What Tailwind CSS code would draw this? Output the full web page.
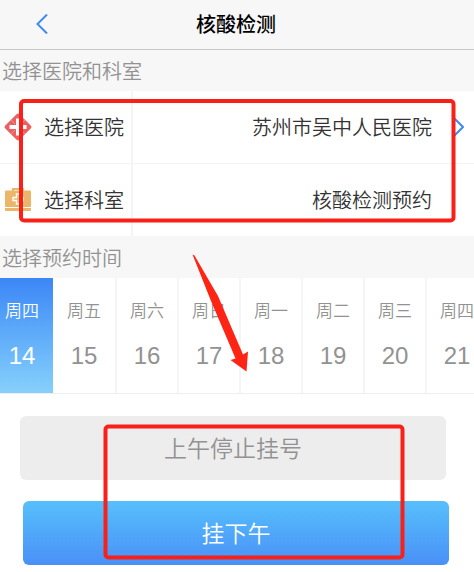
<!DOCTYPE html>
<html lang="zh-CN">
<head>
    <meta charset="UTF-8">
    <meta name="viewport" content="width=device-width, initial-scale=1.0">
    <title>核酸检测</title>
    <script src="https://cdn.jsdelivr.net/npm/@tailwindcss/browser@4"></script>
</head>
<body class="relative overflow-x-hidden bg-white font-['Liberation_Sans','Noto_Sans_CJK_SC',sans-serif] text-[#333]">
    <!-- Header -->
    <header class="grid h-[50px] grid-cols-[60px_1fr_62px] items-center border-b border-[#c8c8c8] bg-[#f7f7f7]">
        <button type="button" aria-label="返回" class="flex h-full items-center pb-[2px] pl-9">
            <svg class="h-5 w-3" viewBox="0 0 12 20" fill="none" stroke="#3d8af0" stroke-width="2"><path d="M11 0.500L1.500 10L11 19.500"/></svg>
        </button>
        <h1 class="text-center text-xl font-medium text-black">核酸检测</h1>
    </header>

    <main>
        <!-- Hospital and department -->
        <h2 class="h-[41px] bg-[#f7f7f7] pl-[2px] text-xl leading-[44px] font-[350] text-[#929292]">选择医院和科室</h2>
        <button type="button" class="flex h-[73px] w-full items-stretch border-b border-[#f3f3f3] text-xl font-[350]">
            <span class="flex w-[133px] items-center gap-3 border-r-2 border-[#f5f5f5] pl-1">
                <svg class="h-7 w-7 shrink-0" viewBox="0 0 28 28">
                    <rect x="4" y="4" width="20" height="20" rx="2" fill="#e96161" transform="rotate(45 14 14)"/>
                    <path d="M12 5.500h4V12h6.500v4H16v6.500h-4V16H5.500v-4H12z" fill="#fff"/>
                    <path d="M7 7l4 4M21 7l-4 4M7 21l4-4M21 21l-4-4" stroke="#f3a0a0" stroke-width="0.800"/>
                </svg>
                <span class="pt-[2px]">选择医院</span>
            </span>
            <span class="flex flex-1 items-center justify-end gap-[22px] pr-[10px]">
                <span class="pt-[2px]">苏州市吴中人民医院</span>
                <svg class="h-[18px] w-[10px]" viewBox="0 0 10 18" fill="none" stroke="#3d8af0" stroke-width="2"><path d="M0.500 0.500L9 9L0.500 17.500"/></svg>
            </span>
        </button>
        <button type="button" class="flex h-[72px] w-full items-stretch text-xl font-[350]">
            <span class="flex w-[133px] items-center gap-3 border-r-2 border-[#f5f5f5] pl-1">
                <svg class="h-7 w-7 shrink-0" viewBox="0 0 28 28">
                    <path d="M9 5V3h10v2" fill="none" stroke="#ecb66a" stroke-width="2"/>
                    <rect x="1" y="4.500" width="26" height="16.500" rx="1" fill="#ecb66a"/>
                    <path d="M1 22h26v2a1 1 0 0 1-1 1H2a1 1 0 0 1-1-1z" fill="#ecb66a"/>
                    <path d="M12.500 8h3v3.500H19v3h-3.500V18h-3v-3.500H9v-3h3.500z" fill="none" stroke="#fff" stroke-width="1.400"/>
                </svg>
                <span class="pt-[2px]">选择科室</span>
            </span>
            <span class="flex flex-1 items-center justify-end pt-[2px] pr-[42px]">核酸检测预约</span>
        </button>

        <!-- Appointment date -->
        <h2 class="h-[42px] bg-[#f7f7f7] pl-[2px] text-xl leading-[46px] font-[350] text-[#929292]">选择预约时间</h2>
        <div class="overflow-hidden border-b border-[#eee]">
            <div class="-ml-[9px] flex h-[115px] text-[17px] font-[350] text-[#929292]">
                <button type="button" aria-pressed="true" class="flex w-[62px] shrink-0 flex-col items-center bg-linear-to-b from-[#3c86f6] to-[#86d0fb] pt-[22px] text-white"><span class="leading-6">周四</span><span class="mt-5 text-2xl leading-6">14</span></button>
                <button type="button" class="flex w-[62px] shrink-0 flex-col items-center pt-[22px]"><span class="leading-6">周五</span><span class="mt-5 text-2xl leading-6">15</span></button>
                <button type="button" class="flex w-[62px] shrink-0 flex-col items-center border-l-2 border-[#f5f5f5] pt-[22px]"><span class="leading-6">周六</span><span class="mt-5 text-2xl leading-6">16</span></button>
                <button type="button" class="flex w-[62px] shrink-0 flex-col items-center border-l-2 border-[#f5f5f5] pt-[22px]"><span class="leading-6">周日</span><span class="mt-5 text-2xl leading-6">17</span></button>
                <button type="button" class="flex w-[62px] shrink-0 flex-col items-center border-l-2 border-[#f5f5f5] pt-[22px]"><span class="leading-6">周一</span><span class="mt-5 text-2xl leading-6">18</span></button>
                <button type="button" class="flex w-[62px] shrink-0 flex-col items-center border-l-2 border-[#f5f5f5] pt-[22px]"><span class="leading-6">周二</span><span class="mt-5 text-2xl leading-6">19</span></button>
                <button type="button" class="flex w-[62px] shrink-0 flex-col items-center border-l-2 border-[#f5f5f5] pt-[22px]"><span class="leading-6">周三</span><span class="mt-5 text-2xl leading-6">20</span></button>
                <button type="button" class="flex w-[62px] shrink-0 flex-col items-center border-l-2 border-[#f5f5f5] pt-[22px]"><span class="leading-6">周四</span><span class="mt-5 text-2xl leading-6">21</span></button>
            </div>
        </div>

        <!-- Actions -->
        <div class="pt-[22px] pb-[7px] text-[23px] font-[350]">
            <div class="pr-7 pl-5">
                <button type="button" disabled class="h-16 w-full rounded-md bg-[#ededed] pt-[2px] text-[#929292]">上午停止挂号</button>
            </div>
            <div class="mt-[21px] pr-[25px] pl-[23px]">
                <button type="button" class="h-16 w-full rounded-md bg-linear-to-b from-[#57bffb] to-[#4a90f7] pt-[2px] text-white">挂下午</button>
            </div>
        </div>
    </main>

    <!-- Markup over the screen -->
    <svg class="pointer-events-none absolute top-0 left-0 h-[572px] w-[474px]" viewBox="0 0 474 572" fill="none" stroke="#f8211a" stroke-width="4">
        <rect x="21" y="101" width="432.500" height="119.500" rx="3"/>
        <rect x="105.500" y="426.500" width="297" height="131" rx="3"/>
        <path d="M192.500 254.500L194.500 255.500L218 296L243 354.500L248 351.500L246.500 371.500L230.500 360L235.500 358.500L211 301Z" fill="#ff2414" stroke="none"/>
    </svg>
</body>
</html>
